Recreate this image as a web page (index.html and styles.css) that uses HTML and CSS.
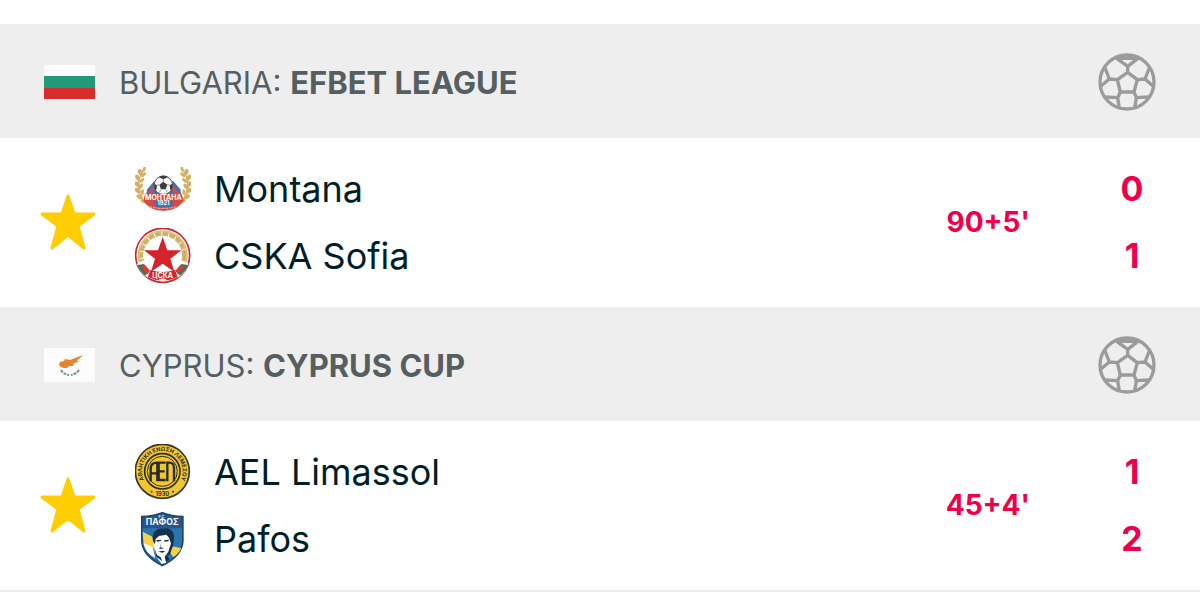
FILE: index.html
```html
<!DOCTYPE html>
<html lang="en">
<head>
  <meta charset="UTF-8">
  <meta name="viewport" content="width=device-width, initial-scale=1.0">
  <title>Live Scores</title>
  <link rel="stylesheet" href="styles.css">
</head>
<body>
  <!-- shared icons -->
  <svg class="defs" width="0" height="0" aria-hidden="true">
    <symbol id="ball" viewBox="24 20 174 174">
      <g fill="none" stroke="#9b9b9b" stroke-width="10" stroke-linejoin="round">
        <circle cx="111" cy="107" r="81"/>
        <path d="M113 78L142 100L132 137H91L82 100Z"/>
        <path d="M113 78V60M80 36L113 60L144 36M88 36H138"/>
        <path d="M82 100L58 98M44 62L58 98L32 120M142 100L165 98M179 62L165 98L190 120"/>
        <path d="M91 137L83 154M46 152L83 154L88 186M132 137L139 154M176 152L139 154L134 186"/>
      </g>
    </symbol>
    <symbol id="star" viewBox="0 0 56 56">
      <path d="M28 2L34 20H54L38 32L44 54L28 41L12 54L18 32L2 20H22Z" fill="#ffcd00" stroke="#ffcd00" stroke-width="3" stroke-linejoin="round"/>
    </symbol>
    <symbol id="leaves" viewBox="0 0 50 130">
      <path d="M32 5C4 45 4 90 42 124" fill="none" stroke="#cfab5c" stroke-width="4"/>
      <g fill="#d2b064">
        <ellipse cx="31" cy="8" rx="5" ry="9" transform="rotate(20 31 8)"/>
        <ellipse cx="18" cy="18" rx="7" ry="11" transform="rotate(-25 18 18)"/>
        <ellipse cx="29" cy="26" rx="5" ry="10" transform="rotate(50 29 26)"/>
        <ellipse cx="10" cy="36" rx="7" ry="11" transform="rotate(-30 10 36)"/>
        <ellipse cx="23" cy="45" rx="5" ry="10" transform="rotate(45 23 45)"/>
        <ellipse cx="8" cy="57" rx="7" ry="11" transform="rotate(-40 8 57)"/>
        <ellipse cx="20" cy="64" rx="5" ry="10" transform="rotate(30 20 64)"/>
        <ellipse cx="10" cy="78" rx="7" ry="11" transform="rotate(-50 10 78)"/>
        <ellipse cx="25" cy="83" rx="5" ry="10" transform="rotate(10 25 83)"/>
        <ellipse cx="16" cy="98" rx="7" ry="11" transform="rotate(-60 16 98)"/>
        <ellipse cx="28" cy="113" rx="5" ry="10" transform="rotate(-65 28 113)"/>
      </g>
    </symbol>
  </svg>

  <main class="scores">
    <section class="league">
      <header class="league-head">
        <svg class="flag" viewBox="0 0 51 34" role="img" aria-label="Bulgaria">
          <rect width="51" height="34" fill="#fcfcfc"/>
          <rect y="11" width="51" height="12" fill="#209a78"/>
          <rect y="23" width="51" height="11" fill="#d62f2b"/>
        </svg>
        <h2 class="league-name">BULGARIA: <strong>EFBET LEAGUE</strong></h2>
        <svg class="ball"><use href="#ball"/></svg>
      </header>

      <div class="match">
        <button class="fav" type="button" aria-label="Favourite"><svg><use href="#star"/></svg></button>
        <div class="teams">
          <div class="team">
            <svg class="logo" viewBox="30 5 168 168">
              <use href="#leaves" x="29" y="22" width="46" height="120"/>
              <use href="#leaves" x="29" y="22" width="46" height="120" transform="translate(229 0) scale(-1 1)"/>
              <path d="M67 90L87 66H145L166 90L172 128L115 155L58 128Z" fill="#3a73b8"/>
              <path d="M61 112L84 80L96 76L76 112ZM170 112L146 80L133 76L154 112Z" fill="#dc4a48"/>
              <circle cx="115" cy="78" r="28" fill="#f5f5f5" stroke="#555" stroke-width="3"/>
              <path d="M115 67L127 76L122 90H108L103 76ZM101 53L115 60L129 53L121 49H109ZM88 73L96 78L94 92L88 88ZM142 73L134 78L136 92L142 88Z" fill="#3c3c3c"/>
              <path d="M115 67V59M103 76L95 78M127 76L135 78M108 90L103 100M122 90L127 100" stroke="#777" stroke-width="2"/>
              <path d="M60 103H170L176 125H55Z" fill="#e0443c"/>
              <path d="M56 124H88L93 142H138L144 124H175Q158 154 115 154Q72 154 56 124Z" fill="#d84848"/>
              <path d="M86 124H144L139 140H92Z" fill="#3179bd"/>
              <path d="M76 142Q115 153 154 142" fill="none" stroke="#f4c9c5" stroke-width="3" stroke-dasharray="5 3"/>
              <text x="115" y="121" class="badge-text" font-size="21" fill="#fff">МОНТАНА</text>
              <text x="115" y="138" class="badge-text" font-size="17" fill="#fff">1921</text>
            </svg>
            <span class="team-name">Montana</span>
          </div>
          <div class="team">
            <svg class="logo" viewBox="30 20 168 168">
              <circle cx="113" cy="102" r="81" fill="#fff" stroke="#c9292b" stroke-width="5"/>
              <circle cx="113" cy="102" r="66" fill="none" stroke="#d3b46a" stroke-width="16" stroke-dasharray="19 3"/>
              <circle cx="113" cy="102" r="72" fill="none" stroke="#dcc183" stroke-width="7" stroke-dasharray="9 4"/>
              <circle cx="113" cy="102" r="66" fill="none" stroke="#c29d4c" stroke-width="2" stroke-dasharray="12 10"/>
              <path d="M36 127L56 117L76 147L68 169Q45 154 36 127Z" fill="#fff"/>
              <path d="M190 127L170 117L150 147L158 169Q181 154 190 127Z" fill="#fff"/>
              <path d="M37 131L57 128L72 148L61 163Q43 148 37 131ZM189 131L169 128L154 148L165 163Q183 148 189 131Z" fill="#34785c"/>
              <path d="M48 136L61 132L75 148L66 160Z" fill="#d93b38"/>
              <path d="M178 136L165 132L151 148L160 160Z" fill="#d93b38"/>
              <circle cx="113" cy="102" r="57" fill="#fff"/>
              <path d="M113 47L127 87H169L136 112L148 151L113 127L78 151L90 112L57 87H99Z" fill="#d5232b"/>
              <path d="M76 146Q113 158 150 146L157 166Q113 189 69 166Z" fill="#d3262c"/>
              <path d="M101 174L113 171L125 174L121 180H105Z" fill="#f4dddd"/>
              <text x="113" y="169" class="badge-text" font-size="21" fill="#fff">ЦСКА</text>
            </svg>
            <span class="team-name">CSKA Sofia</span>
          </div>
        </div>
        <span class="time">90+5'</span>
        <div class="result"><span>0</span><span>1</span></div>
      </div>
    </section>

    <section class="league">
      <header class="league-head">
        <svg class="flag" viewBox="0 0 51 34" role="img" aria-label="Cyprus">
          <rect width="51" height="34" fill="#fcfcfc"/>
          <path d="M15 17L16 14L20 13L21 11L26 12L31 10L39 7L35 11L33 12L34 14L30 15L29 18L25 18L23 20L20 20L17 19Z" fill="#e8822d"/>
          <path d="M17 22Q19 26 25 27M35 22Q32 26 27 27" fill="none" stroke="#5b9a83" stroke-width="2" stroke-dasharray="3 1"/>
        </svg>
        <h2 class="league-name">CYPRUS: <strong>CYPRUS CUP</strong></h2>
        <svg class="ball"><use href="#ball"/></svg>
      </header>

      <div class="match">
        <button class="fav" type="button" aria-label="Favourite"><svg><use href="#star"/></svg></button>
        <div class="teams">
          <div class="team">
            <svg class="logo" viewBox="30 20 168 168">
              <circle cx="112" cy="102" r="81" fill="#f2c62c" stroke="#35372f" stroke-width="5"/>
              <circle cx="112" cy="102" r="53" fill="#f2c62c" stroke="#2b2e2b" stroke-width="5"/>
              <circle cx="112" cy="102" r="45" fill="none" stroke="#2b2e2b" stroke-width="3"/>
              <path d="M77 132V94Q77 76 97 76V132M77 108H97M122 76H101V128H122M101 102H119M127 132V76H133Q147 76 147 92V132" fill="none" stroke="#252a2a" stroke-width="7"/>
              <path id="ael-ring" d="M71 147A61 61 0 1 1 153 147" fill="none"/>
              <text class="badge-text" font-size="17" fill="#2b2e2b"><textPath href="#ael-ring" startOffset="50%">ΑΘΛΗΤΙΚΗ ΕΝΩΣΗ ΛΕΜΕΣΟΥ</textPath></text>
              <text x="112" y="175" class="badge-text" font-size="17" fill="#2b2e2b">1930</text>
              <circle cx="80" cy="163" r="3" fill="#2b2e2b"/>
              <circle cx="144" cy="163" r="3" fill="#2b2e2b"/>
            </svg>
            <span class="team-name">AEL Limassol</span>
          </div>
          <div class="team">
            <svg class="logo" viewBox="30 22 168 168">
              <path d="M50 38Q84 38 112 27Q140 38 174 38V112Q172 157 112 186Q52 157 50 112Z" fill="#23568a" stroke="#1c4068" stroke-width="4"/>
              <path d="M53 74H171V112Q168 154 112 182Q56 154 53 112Z" fill="#2b75ab"/>
              <path d="M53 84L91 104L86 132L56 124Z" fill="#f6d248"/>
              <path d="M138 128L169 133Q162 149 145 161L132 142Z" fill="#f6d248"/>
              <path d="M56 119L83 130L91 164Q59 146 56 119Z" fill="#fff"/>
              <path d="M86 104L99 88L128 88L141 100L143 117L134 148L121 157L124 177L110 181L96 162L86 134Z" fill="#fff"/>
              <path d="M84 113Q77 84 101 75L128 74Q149 80 147 105L144 126L135 151L127 157L134 167L123 176L119 160L130 144L138 119L132 102L124 93L102 97L92 106L90 122Z" fill="#17304d"/>
              <path d="M93 110L107 108L109 112L96 114ZM117 110L132 108L130 113L119 114ZM110 114L106 131L115 133L114 135H103ZM100 144L111 141L121 143L112 147ZM87 129L96 154L107 161L112 173L94 159Z" fill="#17304d"/>
              <text x="111" y="42" class="badge-text" font-size="11" fill="#dceaf3">F.C.</text>
              <text x="112" y="64" class="badge-text" font-size="26" fill="#fff">ΠΑΦΟΣ</text>
            </svg>
            <span class="team-name">Pafos</span>
          </div>
        </div>
        <span class="time">45+4'</span>
        <div class="result"><span>1</span><span>2</span></div>
      </div>
    </section>
  </main>
</body>
</html>
```

FILE: styles.css
```css
* {
  box-sizing: border-box;
}
body {
  margin: 0;
  padding-top: 24px;
  background: #fff;
  color: #001e28;
  font-family: Inter, "Liberation Sans", sans-serif;
}
.defs {
  position: absolute;
}
.scores {
  border-bottom: 2px solid #ebebeb;
}
.league-head {
  display: flex;
  align-items: center;
  gap: 24px;
  height: 114px;
  padding: 2px 44px 0 44px;
  background: #eee;
}
.flag {
  width: 51px;
  height: 34px;
}
.league-name {
  flex: 1;
  margin: 0;
  color: #555e61;
  font-size: 31px;
  font-weight: 400;
}
.league-name strong {
  font-weight: 700;
}
.ball {
  width: 58px;
  height: 58px;
}
.match {
  display: flex;
  align-items: center;
  padding: 17px 44px 18px 40px;
}
.fav {
  width: 56px;
  height: 56px;
  margin-right: 39px;
  padding: 0;
  border: none;
  background: none;
  cursor: pointer;
}
.fav svg {
  display: block;
  width: 56px;
  height: 56px;
}
.teams {
  flex: 1;
}
.team {
  display: flex;
  align-items: center;
  gap: 23px;
  height: 67px;
}
.logo {
  width: 56px;
  height: 56px;
}
.team-name {
  font-size: 36px;
}
.time {
  color: #ee004c;
  font-size: 28px;
  font-weight: 700;
}
.result {
  width: 48px;
  margin-left: 78px;
  color: #ee004c;
  font-size: 34px;
  font-weight: 700;
  line-height: 67px;
  text-align: center;
}
.result span {
  display: block;
}
.badge-text {
  font-family: Inter, "Liberation Sans", sans-serif;
  font-weight: 700;
  text-anchor: middle;
}
```
